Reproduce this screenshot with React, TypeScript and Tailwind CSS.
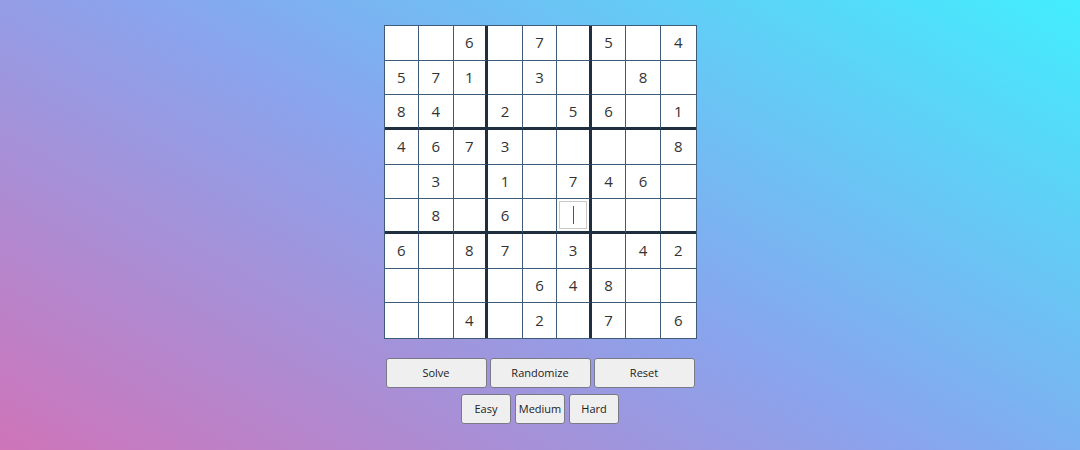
import React from 'react';

// 0 = empty, -1 = the focused (editing) cell
const board: number[][] = [
  [0, 0, 6, 0, 7, 0, 5, 0, 4],
  [5, 7, 1, 0, 3, 0, 0, 8, 0],
  [8, 4, 0, 2, 0, 5, 6, 0, 1],
  [4, 6, 7, 3, 0, 0, 0, 0, 8],
  [0, 3, 0, 1, 0, 7, 4, 6, 0],
  [0, 8, 0, 6, 0, -1, 0, 0, 0],
  [6, 0, 8, 7, 0, 3, 0, 4, 2],
  [0, 0, 0, 0, 6, 4, 8, 0, 0],
  [0, 0, 4, 0, 2, 0, 7, 0, 6],
];

const btn =
  'h-[30px] rounded-[3px] border border-[#7a7a86] bg-[#efefef] text-[11px] text-[#222] ' +
  'hover:bg-[#e5e5e5]';

function Cell({ v, r, c }: { v: number; r: number; c: number }) {
  const right =
    c === 8 ? '' : c === 2 || c === 5 ? 'border-r-[3px] border-r-[#1f2f40]' : 'border-r border-r-[#3e5b7a]';
  const bottom =
    r === 8 ? '' : r === 2 || r === 5 ? 'border-b-[3px] border-b-[#1f2f40]' : 'border-b border-b-[#3e5b7a]';
  return (
    <div className={`flex items-center justify-center bg-white ${right} ${bottom}`}>
      {v === -1 ? (
        <div className="flex h-[calc(100%-4px)] w-[calc(100%-4px)] items-center justify-center border border-[#c9c9c9]">
          <span className="block h-[18px] w-px bg-[#555]" />
        </div>
      ) : (
        <span className="text-[15px] leading-none text-[#333]">{v || ''}</span>
      )}
    </div>
  );
}

export default function App() {
  return (
    <div
      className="flex h-[450px] w-full flex-col items-center bg-[linear-gradient(30deg,#cf74b9,#88a5ee,#42eefd)] pt-[25px]"
      style={{ fontFamily: '"Open Sans", "Noto Sans", sans-serif' }}
    >
      <div className="grid h-[314px] w-[313px] grid-cols-9 grid-rows-9 border border-[#3e5b7a]">
        {board.map((row, r) => row.map((v, c) => <Cell key={`${r}-${c}`} v={v} r={r} c={c} />))}
      </div>

      <div className="mt-[19px] flex gap-[3px]">
        <button type="button" className={`${btn} w-[101px]`}>
          Solve
        </button>
        <button type="button" className={`${btn} w-[101px]`}>
          Randomize
        </button>
        <button type="button" className={`${btn} w-[101px]`}>
          Reset
        </button>
      </div>
      <div className="mt-[6px] flex gap-[4px]">
        <button type="button" className={`${btn} w-[50px]`}>
          Easy
        </button>
        <button type="button" className={`${btn} w-[50px]`}>
          Medium
        </button>
        <button type="button" className={`${btn} w-[50px]`}>
          Hard
        </button>
      </div>
    </div>
  );
}
